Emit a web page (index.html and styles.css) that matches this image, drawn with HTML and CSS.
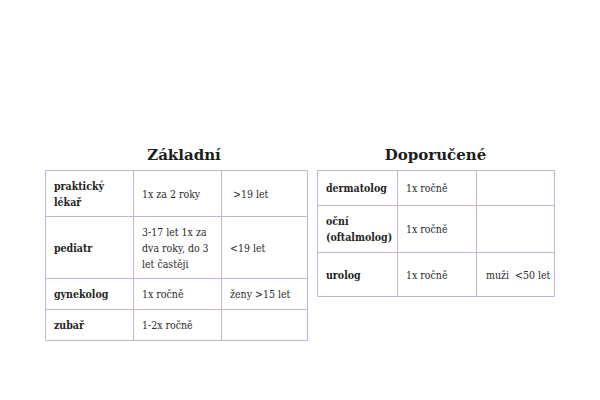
FILE: index.html
```html
<!DOCTYPE html>
<html lang="cs">
<head>
<meta charset="utf-8">
<link rel="stylesheet" href="styles.css">
</head>
<body>
<div class="page">
  <section class="block block-left">
    <h2 class="title title-left">Základní</h2>
    <table class="grid grid-left">
      <colgroup><col class="c1"><col class="c2"><col class="c3"></colgroup>
      <tr class="r1"><th>praktický<br>lékař</th><td>1x za 2 roky</td><td>&nbsp;&gt;19 let</td></tr>
      <tr class="r2"><th>pediatr</th><td>3-17 let 1x za dva roky, do 3 let častěji</td><td>&lt;19 let</td></tr>
      <tr class="r3"><th>gynekolog</th><td>1x ročně</td><td>ženy &gt;15 let</td></tr>
      <tr class="r4"><th>zubař</th><td>1-2x ročně</td><td></td></tr>
    </table>
  </section>
  <section class="block block-right">
    <h2 class="title">Doporučené</h2>
    <table class="grid grid-right">
      <colgroup><col class="d1"><col class="d2"><col class="d3"></colgroup>
      <tr class="s1"><th>dermatolog</th><td>1x ročně</td><td></td></tr>
      <tr class="s2"><th>oční<br>(oftalmolog)</th><td>1x ročně</td><td></td></tr>
      <tr class="s3"><th>urolog</th><td>1x ročně</td><td class="nowrap">muži&nbsp; &lt;50 let</td></tr>
    </table>
  </section>
</div>
</body>
</html>
```
FILE: styles.css
```css
html, body {
  margin: 0;
  padding: 0;
  background: #ffffff;
}
.page {
  display: flex;
  align-items: flex-start;
  gap: 10px;
  padding: 144px 0 0 45px;
  font-family: "DejaVu Serif Condensed", "DejaVu Serif", "Liberation Serif", serif;
  color: #222222;
}
.block {
  display: flex;
  flex-direction: column;
}
.block-left { width: 262px; }
.block-right { width: 237px; }
.title {
  margin: 0;
  height: 26px;
  line-height: 22px;
  text-align: center;
  font-family: "DejaVu Serif", serif;
  font-size: 15px;
  font-weight: bold;
  color: #1d1d1d;
}
.title-left { padding-left: 16px; }
.grid {
  border-collapse: collapse;
  table-layout: fixed;
  width: 100%;
  font-size: 10.5px;
  line-height: 16px;
}
.grid th, .grid td {
  border: 1.5px solid #c6b3d8;
  padding: 0 8px;
  text-align: left;
  vertical-align: middle;
  font-weight: normal;
  color: #2a2a2a;
}
.grid th {
  font-weight: bold;
  color: #1f1f1f;
}
.grid td.nowrap {
  white-space: nowrap;
  padding: 0 6px 0 9px;
}
.c1 { width: 88px; }
.c2 { width: 88px; }
.c3 { width: 86px; }
.d1 { width: 80px; }
.d2 { width: 79px; }
.d3 { width: 78px; }
.r1 { height: 46px; }
.r2 { height: 62px; }
.r3 { height: 31px; }
.r4 { height: 31px; }
.s1 { height: 35px; }
.s2 { height: 47px; }
.s3 { height: 44px; }
```
